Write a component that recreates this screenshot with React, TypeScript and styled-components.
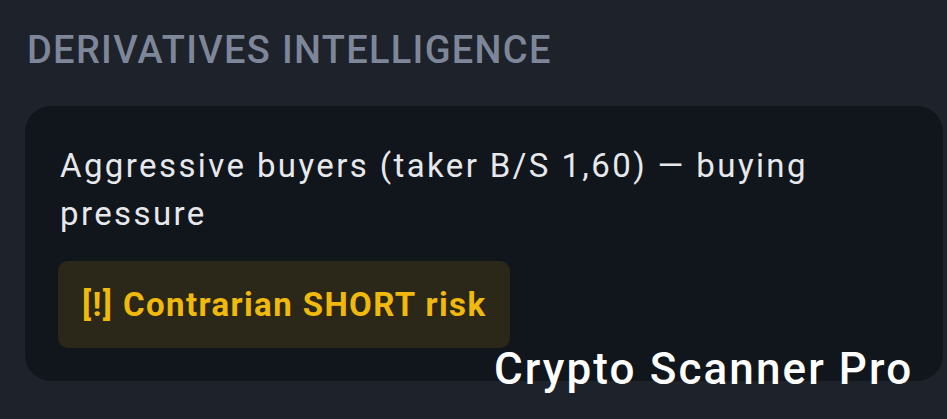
import React from 'react';
import styled, { createGlobalStyle } from 'styled-components';

const GlobalStyle = createGlobalStyle`
  html, body {
    margin: 0;
    padding: 0;
    background: #1e222a;
  }
  body {
    font-family: Roboto, 'Liberation Sans', sans-serif;
    -webkit-font-smoothing: antialiased;
  }
`;

const Screen = styled.div`
  position: relative;
  width: 947px;
  height: 419px;
  overflow: hidden;
  background: #1e222a;
  padding: 28px 4px 0 25px;
  box-sizing: border-box;
  display: flex;
  flex-direction: column;
`;

const SectionTitle = styled.h2`
  margin: 0 0 0 2px;
  font-size: 38px;
  line-height: 44px;
  font-weight: 500;
  color: #7d8799;
  letter-spacing: 1.3px;
`;

const Card = styled.div`
  margin-top: 34px;
  height: 275px;
  box-sizing: border-box;
  background: #11151c;
  border-radius: 26px;
  padding: 36px 33px 0 35px;
  display: flex;
  flex-direction: column;
  align-items: flex-start;
`;

const Summary = styled.p`
  margin: 0;
  font-size: 33px;
  line-height: 48px;
  font-weight: 400;
  color: #e6e8eb;
  letter-spacing: 2.4px;
  max-width: 790px;
`;

const Warning = styled.div`
  margin-top: 23px;
  margin-left: -2px;
  padding: 0 24px;
  height: 87px;
  display: flex;
  align-items: center;
  border-radius: 10px;
  background: rgba(240, 185, 11, 0.12);
  color: #f0b90b;
  font-size: 33px;
  font-weight: 700;
  letter-spacing: 1.4px;
`;

const Watermark = styled.div`
  position: absolute;
  left: 494px;
  top: 343px;
  color: #ffffff;
  font-size: 44px;
  line-height: 52px;
  font-weight: 500;
  letter-spacing: 2.1px;
`;

const App: React.FC = () => {
  return (
    <>
      <GlobalStyle />
      <Screen>
        <SectionTitle>DERIVATIVES INTELLIGENCE</SectionTitle>
        <Card>
          <Summary>Aggressive buyers (taker B/S 1,60) — buying pressure</Summary>
          <Warning>[!] Contrarian SHORT risk</Warning>
        </Card>
        <Watermark>Crypto Scanner Pro</Watermark>
      </Screen>
    </>
  );
};

export default App;
